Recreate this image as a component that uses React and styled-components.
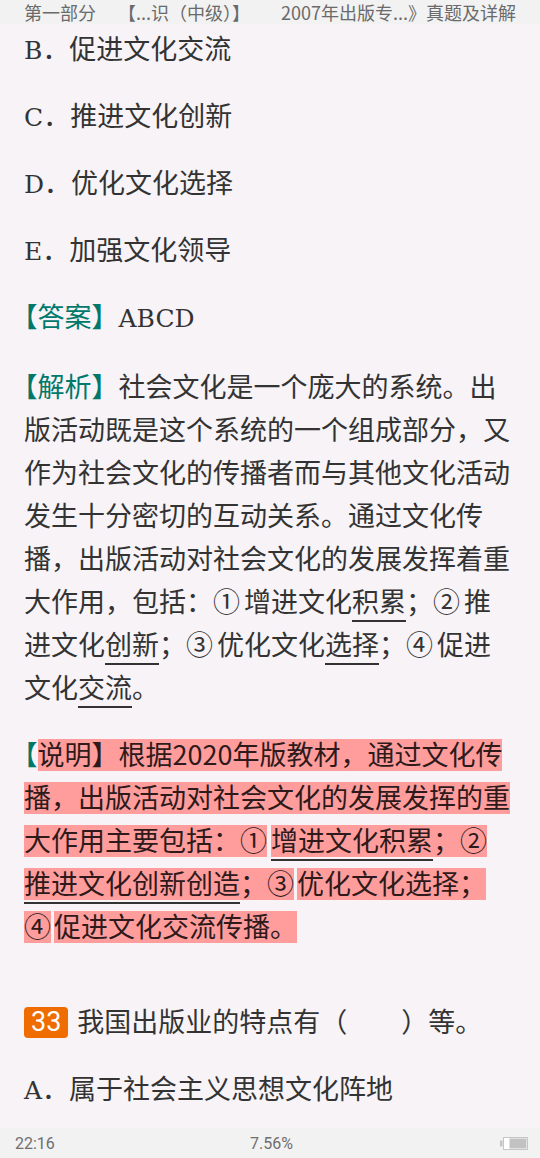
import React from "react"
import styled, { createGlobalStyle } from "styled-components"

const GlobalStyle = createGlobalStyle`
  html, body {
    margin: 0;
    padding: 0;
    background: #f7f3f7;
  }
  body {
    font-family: "Noto Sans CJK SC", "Noto Sans", sans-serif;
  }
`

const Screen = styled.div`
  width: 540px;
  height: 1158px;
  display: flex;
  flex-direction: column;
  overflow: hidden;
  background: #f7f3f7;
`

const TopBar = styled.div`
  height: 24px;
  flex: 0 0 24px;
  background: #f2f2f2;
  display: flex;
  align-items: center;
  padding: 0 24px;
  font-size: 18px;
  line-height: 24px;
  color: #6a6a6a;
  white-space: nowrap;
`

const TopItem = styled.span`
  margin-left: ${(p) => p.$left || "0"};
`

const Content = styled.div`
  flex: 1;
  overflow: hidden;
  padding: 2px 24px 0;
`

const Para = styled.div`
  margin: 0 0 ${(p) => p.$after || "24px"};
  font-size: 27px;
  line-height: 43px;
  color: #333;
  white-space: nowrap;
`

const Letter = styled.span`
  font-family: "DejaVu Serif", "Liberation Serif", serif;
  font-size: 25px;
  line-height: 1;
`

const Label = styled.span`
  color: #00796b;
`

const Open = styled.span`
  font-feature-settings: "halt";
`

const Circled = styled.span`
  margin-right: 4px;
`

const Under = styled.span`
  text-decoration: underline;
  text-decoration-thickness: 1.5px;
  text-underline-offset: 8px;
  text-decoration-color: #333;
`

const Mark = styled.span`
  color: #2e1a1a;
  margin-left: ${(p) => p.$left || "0"};
  background: linear-gradient(
    to bottom,
    transparent 5px,
    #ff9d9d 5px,
    #ff9d9d calc(100% - 2px),
    transparent calc(100% - 2px)
  );
`

const Badge = styled.span`
  display: inline-block;
  height: 31px;
  line-height: 31px;
  padding: 0 7px;
  margin-right: 9px;
  border-radius: 4px;
  background: #ef6c00;
  color: #fff;
  font-family: Roboto, "Noto Sans", sans-serif;
  font-size: 27px;
  vertical-align: middle;
  position: relative;
  top: -2px;
`

const BottomBar = styled.div`
  height: 30px;
  flex: 0 0 30px;
  background: #f2f2f2;
  display: grid;
  grid-template-columns: 1fr auto 1fr;
  align-items: center;
  padding: 0 12px 0 15px;
  font-family: Roboto, "Noto Sans", sans-serif;
  font-size: 16px;
  color: #6e6e6e;
`

const Battery = styled.div`
  justify-self: end;
  display: flex;
  align-items: center;
`

const BatteryIcon = () => (
  <svg width="28" height="13" viewBox="0 0 28 13">
    <rect x="0" y="3.5" width="2.5" height="6" fill="#c4c4c4" />
    <rect x="3.5" y="0.5" width="24" height="12" fill="#fff" stroke="#c6c6c6" />
    <rect x="9.5" y="1.5" width="17" height="10" fill="#c2c2c2" />
  </svg>
)

export default function App() {
  return (
    <Screen>
      <GlobalStyle />
      <TopBar>
        <TopItem>第一部分</TopItem>
        <TopItem $left="22px">【...识（中级）】</TopItem>
        <TopItem $left="auto">2007年出版专...》真题及详解</TopItem>
      </TopBar>
      <Content>
        <Para><Letter>B</Letter>．促进文化交流</Para>
        <Para><Letter>C</Letter>．推进文化创新</Para>
        <Para><Letter>D</Letter>．优化文化选择</Para>
        <Para><Letter>E</Letter>．加强文化领导</Para>
        <Para $after="27px">
          <Label><Open>【</Open>答案】</Label><Letter>ABCD</Letter>
        </Para>
        <Para>
          <Label><Open>【</Open>解析】</Label>社会文化是一个庞大的系统。出<br />
          版活动既是这个系统的一个组成部分，又<br />
          作为社会文化的传播者而与其他文化活动<br />
          发生十分密切的互动关系。通过文化传<br />
          播，出版活动对社会文化的发展发挥着重<br />
          大作用，包括：<Circled>①</Circled>增进文化<Under>积累</Under>；<Circled>②</Circled>推<br />
          进文化<Under>创新</Under>；<Circled>③</Circled>优化文化<Under>选择</Under>；<Circled>④</Circled>促进<br />
          文化<Under>交流</Under>。
        </Para>
        <Para $after="52px">
          <Label><Open>【</Open></Label>
          <Mark>说明】根据2020年版教材，通过文化传<br />
          播，出版活动对社会文化的发展发挥的重<br />
          大作用主要包括：①</Mark>
          <Mark $left="4px"><Under>增进文化积累</Under>；②<br />
          <Under>推进文化创新创造</Under>；③</Mark>
          <Mark $left="3px">优化文化选择；<br />
          ④</Mark>
          <Mark $left="3px">促进文化交流传播。</Mark>
        </Para>
        <Para>
          <Badge>33</Badge>我国出版业的特点有（　　）等。
        </Para>
        <Para><Letter>A</Letter>．属于社会主义思想文化阵地</Para>
      </Content>
      <BottomBar>
        <span>22:16</span>
        <span>7.56%</span>
        <Battery><BatteryIcon /></Battery>
      </BottomBar>
    </Screen>
  )
}
